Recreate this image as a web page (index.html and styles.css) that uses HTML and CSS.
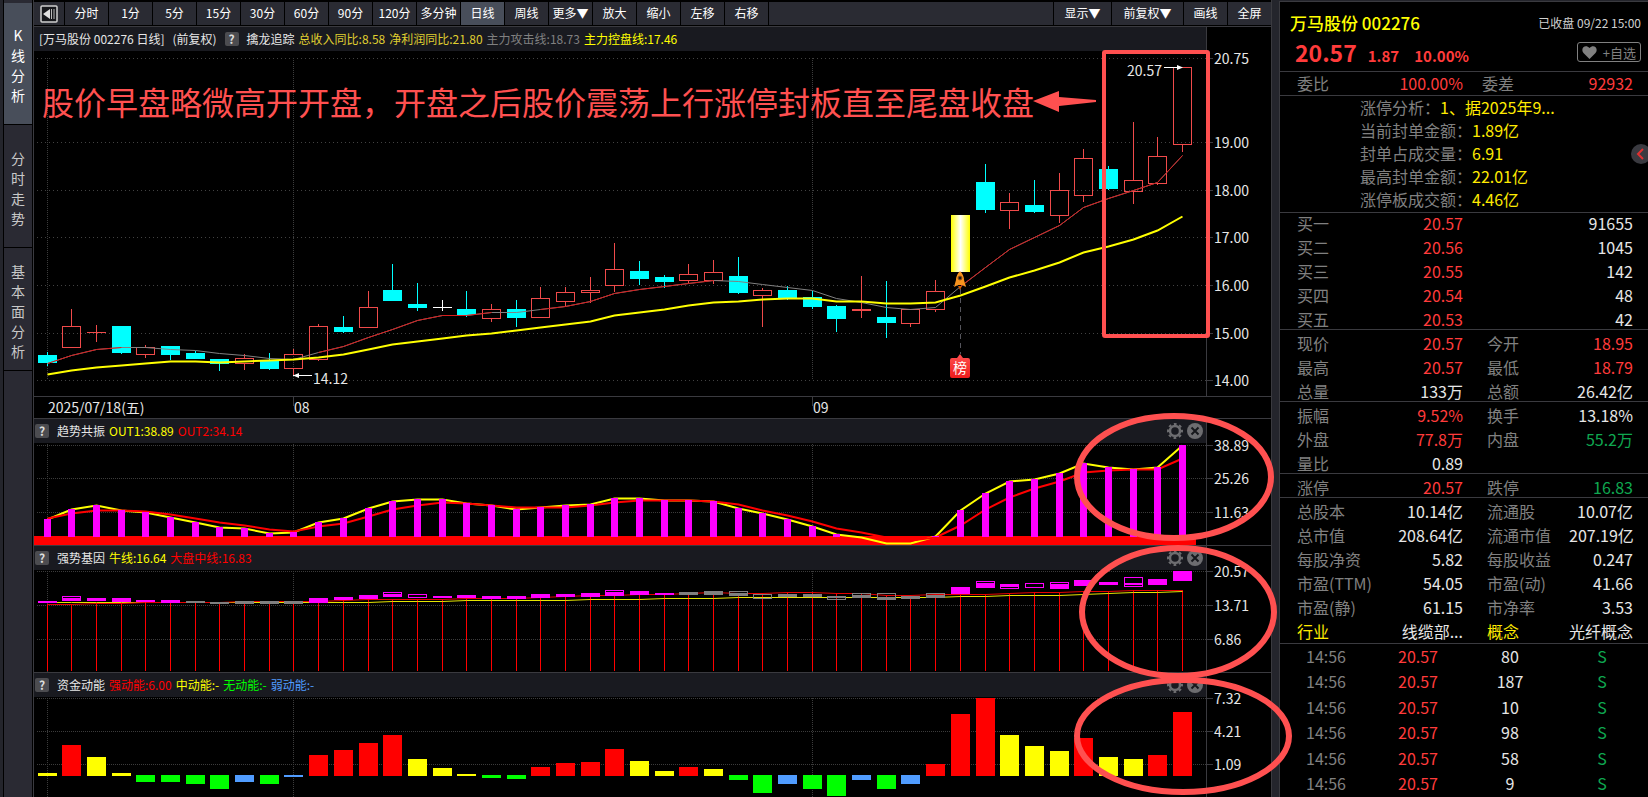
FILE: index.html
```html
<!DOCTYPE html>
<html lang="zh-CN">
<head>
    <meta charset="UTF-8">
    <meta name="viewport" content="width=device-width, initial-scale=1.0">
    <title>万马股份 002276</title>
    <link rel="stylesheet" href="styles.css">
</head>
<body>
    <svg class="symbols" aria-hidden="true">
        <symbol id="icon-gear" viewBox="0 0 16 16">
            <circle cx="8" cy="8" r="5" fill="none" stroke="#6d6d70" stroke-width="2.500"/>
            <circle cx="8" cy="8" r="7" fill="none" stroke="#6d6d70" stroke-width="2" stroke-dasharray="2.8 2.700" stroke-dashoffset="1.400"/>
        </symbol>
        <symbol id="icon-close" viewBox="0 0 16 16">
            <circle cx="8" cy="8" r="8" fill="#6d6d70"/>
            <path d="M4.500 4.500L11.500 11.500M11.500 4.500L4.500 11.500" stroke="#17181c" stroke-width="2"/>
        </symbol>
    </svg>

    <div class="app">
        <nav class="side-tabs">
            <button class="side-tab active">K线分析</button>
            <button class="side-tab">分时走势</button>
            <button class="side-tab">基本面分析</button>
        </nav>

        <main class="charts">
            <div class="toolbar">
                <button class="collapse-left" aria-label="收起">
                    <svg viewBox="0 0 18 18" width="18" height="18">
                        <rect x="1" y="1" width="16" height="16" rx="1" fill="#17181c" stroke="#d0d0d0" stroke-width="1.500"/>
                        <path d="M3 9L10 4V14Z" fill="#e0e0e0"/>
                        <path d="M11.500 4V14M14 4V14" stroke="#b8b8b8"/>
                    </svg>
                </button>
                <button class="tool">分时</button>
                <button class="tool">1分</button>
                <button class="tool">5分</button>
                <button class="tool">15分</button>
                <button class="tool">30分</button>
                <button class="tool">60分</button>
                <button class="tool">90分</button>
                <button class="tool">120分</button>
                <button class="tool">多分钟</button>
                <button class="tool active">日线</button>
                <button class="tool">周线</button>
                <button class="tool">更多▼</button>
                <button class="tool">放大</button>
                <button class="tool">缩小</button>
                <button class="tool">左移</button>
                <button class="tool">右移</button>
                <div class="toolbar-space"></div>
                <button class="tool tool-show">显示▼</button>
                <button class="tool tool-wide">前复权▼</button>
                <button class="tool">画线</button>
                <button class="tool">全屏</button>
            </div>

            <div class="pane-head pane-head-main">
                <div class="legend">
                    <span class="stock">[万马股份 002276 日线]</span>
                    <span>(前复权)</span>
                    <button class="help">?</button>
                    <span>擒龙追踪</span>
                    <span class="gold">总收入同比:8.58</span>
                    <span class="gold">净利润同比:21.80</span>
                    <span class="gray">主力攻击线:18.73</span>
                    <span class="yellow">主力控盘线:17.46</span>
                </div>
            </div>
            <div class="plot plot-main">
                <svg class="canvas" id="kline" viewBox="34 51 1172 345" preserveAspectRatio="none">
                    <defs>
                        <linearGradient id="glow">
                            <stop offset="0" stop-color="#ffff00"/>
                            <stop offset="0.5" stop-color="#ffffff"/>
                            <stop offset="1" stop-color="#ffff00"/>
                        </linearGradient>
                        <linearGradient id="badge" x2="0" y2="1">
                            <stop offset="0" stop-color="#ff5050"/>
                            <stop offset="1" stop-color="#ee1c1c"/>
                        </linearGradient>
                    </defs>
                </svg>
                <svg class="axis" id="axis-kline"></svg>
            </div>

            <svg class="dates" viewBox="34 397 1237 21" preserveAspectRatio="none">
                <path d="M293.500 397V406M812.500 397V406" stroke="#3c3c40"/>
                <text x="48" y="413">2025/07/18(五)</text>
                <text x="294" y="413">08</text>
                <text x="813" y="413">09</text>
            </svg>

            <div class="pane-head">
                <div class="legend">
                    <button class="help">?</button>
                    <span>趋势共振</span>
                    <span class="yellow">OUT1:38.89</span>
                    <span class="red">OUT2:34.14</span>
                    <div class="pane-tools">
                        <button aria-label="设置"><svg width="16" height="16"><use href="#icon-gear"/></svg></button>
                        <button aria-label="关闭"><svg width="16" height="16"><use href="#icon-close"/></svg></button>
                    </div>
                </div>
            </div>
            <div class="plot plot-sub">
                <svg class="canvas" id="trend" viewBox="34 443 1172 102" preserveAspectRatio="none"></svg>
                <svg class="axis" id="axis-trend"></svg>
            </div>

            <div class="pane-head">
                <div class="legend">
                    <button class="help">?</button>
                    <span>强势基因</span>
                    <span class="yellow">牛线:16.64</span>
                    <span class="red">大盘中线:16.83</span>
                    <div class="pane-tools">
                        <button aria-label="设置"><svg width="16" height="16"><use href="#icon-gear"/></svg></button>
                        <button aria-label="关闭"><svg width="16" height="16"><use href="#icon-close"/></svg></button>
                    </div>
                </div>
            </div>
            <div class="plot plot-sub">
                <svg class="canvas" id="gene" viewBox="34 570 1172 102" preserveAspectRatio="none"></svg>
                <svg class="axis" id="axis-gene"></svg>
            </div>

            <div class="pane-head">
                <div class="legend">
                    <button class="help">?</button>
                    <span>资金动能</span>
                    <span class="red">强动能:6.00</span>
                    <span class="yellow">中动能:-</span>
                    <span class="lime">无动能:-</span>
                    <span class="blue">弱动能:-</span>
                    <div class="pane-tools">
                        <button aria-label="设置"><svg width="16" height="16"><use href="#icon-gear"/></svg></button>
                        <button aria-label="关闭"><svg width="16" height="16"><use href="#icon-close"/></svg></button>
                    </div>
                </div>
            </div>
            <div class="plot plot-last">
                <svg class="canvas" id="money" viewBox="34 697 1172 100" preserveAspectRatio="none"></svg>
                <svg class="axis" id="axis-money"></svg>
            </div>
        </main>

        <aside class="quote">
            <header class="quote-head">
                <div class="quote-row">
                    <h1>万马股份 002276</h1>
                    <span class="status">已收盘 09/22 15:00</span>
                </div>
                <div class="quote-row">
                    <div class="price">
                        <strong class="last">20.57</strong>
                        <strong class="change">1.87</strong>
                        <strong>10.00%</strong>
                    </div>
                    <button class="favorite">
                        <svg viewBox="0 0 15 13" width="15" height="13"><path d="M7.500 13L1.500 7C-2 3 3-2.500 7.500 2C12-2.500 17 3 13.500 7Z" fill="#808080"/></svg>
                        +自选
                    </button>
                </div>
            </header>

            <table class="quote-table ratio">
                <tr><th>委比</th><td class="up">100.00%</td><th>委差</th><td class="up">92932</td></tr>
            </table>

            <div class="analysis">
                <p>涨停分析：<span>1、据2025年9...</span></p>
                <p>当前封单金额：<span>1.89亿</span></p>
                <p>封单占成交量：<span>6.91</span></p>
                <p>最高封单金额：<span>22.01亿</span></p>
                <p>涨停板成交额：<span>4.46亿</span></p>
            </div>

            <table class="quote-table bids">
                <tr><th>买一</th><td class="up">20.57</td><th></th><td>91655</td></tr>
                <tr><th>买二</th><td class="up">20.56</td><th></th><td>1045</td></tr>
                <tr><th>买三</th><td class="up">20.55</td><th></th><td>142</td></tr>
                <tr><th>买四</th><td class="up">20.54</td><th></th><td>48</td></tr>
                <tr><th>买五</th><td class="up">20.53</td><th></th><td>42</td></tr>
            </table>
            <table class="quote-table">
                <tr><th>现价</th><td class="up">20.57</td><th>今开</th><td class="up">18.95</td></tr>
                <tr><th>最高</th><td class="up">20.57</td><th>最低</th><td class="up">18.79</td></tr>
                <tr><th>总量</th><td>133万</td><th>总额</th><td>26.42亿</td></tr>
            </table>
            <table class="quote-table">
                <tr><th>振幅</th><td class="up">9.52%</td><th>换手</th><td>13.18%</td></tr>
                <tr><th>外盘</th><td class="up">77.8万</td><th>内盘</th><td class="down">55.2万</td></tr>
                <tr><th>量比</th><td>0.89</td><th></th><td></td></tr>
            </table>
            <table class="quote-table">
                <tr><th>涨停</th><td class="up">20.57</td><th>跌停</th><td class="down">16.83</td></tr>
            </table>
            <table class="quote-table">
                <tr><th>总股本</th><td>10.14亿</td><th>流通股</th><td>10.07亿</td></tr>
                <tr><th>总市值</th><td>208.64亿</td><th>流通市值</th><td>207.19亿</td></tr>
                <tr><th>每股净资</th><td>5.82</td><th>每股收益</th><td>0.247</td></tr>
                <tr><th>市盈(TTM)</th><td>54.05</td><th>市盈(动)</th><td>41.66</td></tr>
                <tr><th>市盈(静)</th><td>61.15</td><th>市净率</th><td>3.53</td></tr>
                <tr><th class="link">行业</th><td>线缆部...</td><th class="link">概念</th><td>光纤概念</td></tr>
            </table>

            <div class="ticks">
                <table>
                    <tr><th>14:56</th><td class="up">20.57</td><td>80</td><td class="down">S</td></tr>
                    <tr><th>14:56</th><td class="up">20.57</td><td>187</td><td class="down">S</td></tr>
                    <tr><th>14:56</th><td class="up">20.57</td><td>10</td><td class="down">S</td></tr>
                    <tr><th>14:56</th><td class="up">20.57</td><td>98</td><td class="down">S</td></tr>
                    <tr><th>14:56</th><td class="up">20.57</td><td>58</td><td class="down">S</td></tr>
                    <tr><th>14:56</th><td class="up">20.57</td><td>9</td><td class="down">S</td></tr>
                </table>
            </div>

            <button class="expand" aria-label="展开">
                <svg viewBox="0 0 20 20" width="20" height="20"><path d="M12 5L7 10L12 15" fill="none" stroke="#e03030" stroke-width="2"/></svg>
            </button>
        </aside>
    </div>

    <!-- hand-drawn notes over the charts -->
    <svg class="notes" viewBox="0 0 1648 797" preserveAspectRatio="none">
        <text x="42" y="115">股价早盘略微高开开盘，开盘之后股价震荡上行涨停封板直至尾盘收盘</text>
        <path class="arrow" d="M1033 101L1059 91V97L1096 100V102L1059 106V112Z"/>
        <rect x="1104" y="52" width="104" height="284" rx="1" stroke-width="4"/>
        <ellipse cx="1174" cy="477" rx="97" ry="61"/>
        <ellipse cx="1178" cy="612" rx="96" ry="64"/>
        <ellipse cx="1183" cy="736" rx="106" ry="56"/>
    </svg>

    <script src="script.js"></script>
</body>
</html>
```

FILE: styles.css
```css
* {
    box-sizing: border-box;
}

body {
    margin: 0;
    background-color: #24252c;
    color: #e6e6e6;
    font-family: "Noto Sans CJK SC", "Open Sans", sans-serif;
    font-size: 12px;
}

button {
    margin: 0;
    padding: 0;
    border: none;
    background: none;
    color: inherit;
    font: inherit;
    cursor: pointer;
}

svg {
    display: block;
}

.symbols {
    position: absolute;
    width: 0;
    height: 0;
}

.app {
    display: grid;
    grid-template-columns: 33px 1fr 376px;
    grid-template-rows: minmax(0, 1fr);
    height: 100vh;
    min-height: 780px;
    overflow: hidden;
}

/* left tabs */
.side-tabs {
    margin-left: 3px;
    padding: 3px 1px 0 0;
    border-left: 1px solid #000;
    background-color: #2a2a33;
    box-shadow: inset -1px 0 0 #000;
}

.side-tab {
    display: block;
    width: 28px;
    height: 123px;
    padding: 3px 7px 0;
    border-bottom: 1px solid #000;
    color: #c8c8c8;
    font-size: 14px;
    line-height: 20px;
    word-break: break-all;
}

.side-tab.active {
    height: 122px;
    background-color: #484e5a;
    color: #fff;
}

/* chart column */
.charts {
    display: flex;
    flex-direction: column;
    min-width: 0;
    border-left: 1px solid #3a3a3f;
    border-right: 1px solid #3a3a3f;
    background-color: #000;
}

.toolbar {
    display: flex;
    flex: none;
    height: 27px;
    padding: 2px 0 1px;
    border-bottom: 1px solid #3a3a3f;
}

.collapse-left {
    width: 30px;
    padding: 2px 6px;
    background-color: #2a2b33;
}

.tool {
    width: 44px;
    padding-bottom: 2px;
    border-left: 1px solid #000;
    background-color: #2a2b33;
    color: #fff;
    line-height: 20px;
    white-space: nowrap;
}

.charts .tool.active {
    background-color: #484e5a;
}

.tool-show {
    width: 58px;
}

.tool-wide {
    width: 72px;
}

.toolbar-space {
    flex: 1;
    border-left: 1px solid #000;
    background-color: #2a2b33;
}

.pane-head {
    flex: none;
    height: 24px;
    padding-right: 65px;
}

.legend {
    display: flex;
    align-items: center;
    gap: 4px;
    height: 24px;
    padding: 0 3px 0 1px;
    background-color: #191a20;
    box-shadow: 1px 0 0 #3a3a3f;
    line-height: 20px;
    white-space: nowrap;
}

.pane-head-main .legend {
    padding-left: 5px;
}

.stock {
    margin-right: 4px;
}

.help {
    width: 14px;
    height: 14px;
    margin-right: 4px;
    border-radius: 2px;
    background-color: #4c4c50;
    color: #ddd;
    font-weight: bold;
    line-height: 14px;
}

.pane-head-main .help {
    margin-left: 4px;
}

.pane-tools {
    display: flex;
    gap: 4px;
    margin-left: auto;
}

.gold { color: #e0d030; }
.yellow { color: #ffff00; }
.red { color: #ff0000; }
.gray { color: #808080; }
.lime { color: #00ff00; }
.blue { color: #509cff; }

.plot {
    display: flex;
    min-height: 0;
    border-bottom: 1px solid #3a3a3f;
}

/* the borders are part of each share, so the shares add up to the column */
.plot-main {
    flex: 345 0 1px;
}

.plot-sub {
    flex: 102 0 1px;
}

.plot-last {
    flex: 100 0 0;
    border-bottom: none;
}

.canvas {
    flex: 1;
    min-width: 0;
    height: 100%;
    fill: none;
}

.canvas rect {
    shape-rendering: crispEdges;
}

.axis {
    width: 65px;
    height: 100%;
    overflow: visible;
    border-left: 1px solid #3a3a3f;
}

.axis text,
.canvas text,
.dates text {
    fill: #e6e6e6;
    font-size: 14px;
}

.canvas .badge-text {
    fill: #fff;
}

.dates {
    flex: none;
    width: 100%;
    height: 22px;
    border-bottom: 1px solid #3a3a3f;
}

.grid {
    stroke: #424242;
    stroke-dasharray: 1 3;
}

.grid-fine {
    stroke: #3c3c3c;
    stroke-dasharray: 1 1;
}

/* quote panel */
.quote {
    position: relative;
    display: flex;
    flex-direction: column;
    min-width: 0;
    margin: 1px 0 0 7px;
    border-top: 1px solid #3a3a3f;
    border-left: 1px solid #3a3a3f;
    background-color: #000;
}

.quote-head {
    height: 70px;
    padding: 5px 7px 0 10px;
    border-bottom: 1px solid #3a3a3f;
}

.quote-row {
    display: flex;
    align-items: center;
    justify-content: space-between;
    height: 30px;
}

.quote h1 {
    margin: 0;
    color: #ffff00;
    font-size: 17px;
    font-weight: 500;
}

.status {
    color: #d0d0d0;
}

.price {
    display: flex;
    align-items: baseline;
    padding-left: 5px;
    color: #ff3b3b;
    font-size: 15px;
}

.last {
    margin-right: 11px;
    font-size: 23px;
    line-height: 30px;
}

.change {
    margin-right: 15px;
}

.favorite {
    display: flex;
    align-items: center;
    gap: 6px;
    height: 20px;
    padding: 0 4px;
    border: 1px solid #808080;
    border-radius: 3px;
    color: #808080;
    font-size: 13px;
}

.quote-table {
    width: 100%;
    border-spacing: 0;
    table-layout: fixed;
    box-shadow: inset 0 -1px 0 #3a3a3f;
    font-size: 16px;
    line-height: 20px;
}

.quote-table th,
.quote-table td {
    padding: 3px 0 1px;
    font-weight: normal;
    white-space: nowrap;
}

.quote-table th {
    width: 106px;
    padding-left: 17px;
    color: #808080;
    text-align: left;
}

.quote-table td {
    text-align: right;
}

.quote-table th:nth-child(3) {
    padding-left: 24px;
}

.quote-table td:nth-child(2) {
    width: 77px;
}

.quote-table td:nth-child(4) {
    padding-right: 15px;
}

.quote-table:last-of-type {
    padding-bottom: 2px;
}

.ratio th,
.ratio td {
    padding-top: 1px;
    padding-bottom: 3px;
}

.ratio th:nth-child(3) {
    padding-left: 19px;
}

.quote-table.bids {
    margin-top: -3px;
}

.quote .up { color: #ff3b3b; }
.quote .down { color: #0fa850; }
.quote .link { color: #ffeb00; }

.analysis {
    height: 117px;
    padding-left: 80px;
    border-bottom: 1px solid #3a3a3f;
    color: #808080;
    font-size: 16px;
    line-height: 23px;
}

.analysis p {
    margin: 0;
}

.analysis span {
    color: #ffeb00;
}

.ticks {
    flex: 1;
    min-height: 0;
}

.ticks table {
    width: 100%;
    height: 100%;
    border-spacing: 0;
    table-layout: fixed;
    font-size: 16px;
    line-height: 20px;
    text-align: center;
}

.ticks th,
.ticks td {
    padding: 0 0 2px;
}

.ticks th {
    color: #808080;
    font-weight: normal;
}

.expand {
    position: absolute;
    top: 142px;
    right: -3px;
    width: 20px;
    height: 20px;
    border-radius: 50%;
    background-color: #3a3a40;
}

/* notes drawn by hand */
.notes {
    position: absolute;
    top: 0;
    left: 0;
    width: 100%;
    height: 100%;
    fill: none;
    stroke: #ff5050;
    stroke-width: 6;
    pointer-events: none;
}

.notes text {
    fill: #ff5050;
    stroke: none;
    font-size: 32px;
}

.notes .arrow {
    fill: #ff5050;
    stroke: none;
}
```

FILE: script.js
```javascript
const NS = 'http://www.w3.org/2000/svg';
const RED = '#ff0000', YELLOW = '#ffff00', LIME = '#00ff00', BLUE = '#509cff';
const MAGENTA = '#ff00ff', GRAY = '#808080', CYAN = '#00ffff', UP = '#f04a4a';

// kind, high, body top, body bottom, low
const candles = [
    ['c',352,355,363,366],['r',309,326,348,348],['r',325,332,332,342],['c',326,326,353,354],['r',345,347,355,358],
    ['c',346,346,355,360],['c',351,353,359,359],['c',359,359,364,371],['r',354,358,364,370],['c',353,361,369,370],
    ['r',349,354,369,375],['r',324,326,360,361],['c',316,327,332,333],['r',291,307,328,328],['c',264,290,301,301],
    ['c',283,304,308,311],['w',300,307,307,311],['c',291,309,315,317],['r',304,309,319,322],['c',300,309,318,327],
    ['r',287,298,318,318],['r',287,292,302,307],['r',277,290,293,303],['r',243,269,286,292],['c',261,271,279,285],
    ['c',275,277,282,288],['r',264,274,281,283],['r',260,272,281,284],['c',257,276,293,294],['r',288,290,296,327],
    ['c',286,290,298,300],['c',291,297,307,309],['c',305,306,319,332],['r',276,309,311,318],['c',281,317,323,338],
    ['r',309,309,324,327],['r',280,291,310,312],['y',215,215,272,272],['c',164,182,210,213],['r',193,202,211,229],
    ['c',180,205,212,213],['r',173,190,216,223],['r',149,158,196,202],['c',166,169,189,190],['r',122,180,192,204],
    ['r',137,156,184,185],['r',67,67,145,152]
];
const attack = [363,355,349,347,347,349,350,353,355,358,359,352,346,337,329,320,315,315,312,312,309,306,301,293,289,286,283,280,281,284,287,290,298,302,307,309,307,286,267,249,237,225,207,198,190,182,155];
const control = [374,370,367,365,363,361,361,362,361,360,359,357,354,349,344,341,338,335,333,330,327,324,321,315,312,309,305,302,301,299,298,298,301,301,303,303,302,295,286,277,270,262,252,246,239,230,216];
const out1 = [519,509,505,510,512,517,522,527,528,533,532,522,518,508,501,499,499,503,505,509,507,505,504,498,498,500,500,501,508,513,519,526,534,537,543,543,536,510,493,481,479,473,463,467,469,467,445];
const out2 = [518,513,510,510,511,514,518,522,525,529,531,526,523,516,509,505,502,503,505,507,507,507,505,502,500,500,500,501,504,510,515,521,528,532,537,540,537,525,509,497,488,481,472,470,469,469,458];
// box top, filled part top, filled part bottom, box bottom
const boxes = [
    [601,601,603,603],[596,598,601,601],[598,598,601,601],[598,598,602,602],[600,600,602,602],[600,600,603,603],[601,601,603,603],
    [602,602,604,604],[601,601,604,604],[601,601,604,604],[601,601,604,604],[598,598,603,603],[597,597,600,600],[595,595,599,599],
    [592,594,597,597],[594,594,595,598],[596,596,598,598],[595,595,598,598],[596,596,599,599],[596,596,599,599],[594,594,598,598],
    [594,594,597,597],[593,593,597,597],[590,592,596,596],[591,591,595,595],[593,593,595,595],[592,592,595,595],[591,592,595,595],
    [591,593,596,596],[594,594,595,599],[594,594,597,597],[594,594,597,597],[596,596,598,600],[593,595,598,598],[593,597,600,600],
    [596,596,599,599],[593,595,598,598],[587,587,594,594],[581,583,588,588],[584,584,587,589],[583,583,584,588],[582,584,589,589],
    [580,580,586,586],[582,582,585,585],[577,583,585,587],[579,580,585,585],[571,571,581,581]
];
const grayBox = i => (i > 5 && i < 11) || (i > 25 && i < 37);
const middle = [604,604,603,603,602,602,602,602,601,601,601,601,600,599,599,599,599,598,598,598,597,596,595,595,594,594,593,592,593,593,592,592,593,593,595,595,594,594,594,593,592,592,591,591,590,590,590];
const bull = [602,602,602,602,602,602,602,602,602,602,602,602,602,602,601,601,601,600,600,600,600,600,599,599,599,598,598,598,597,597,597,597,597,597,597,597,597,596,596,595,595,595,594,593,592,592,591];
// colour, bar end
const money = [
    ['y',773],['r',745],['y',757],['y',773],['g',782],['g',782],['g',784],['g',789],['b',782],['g',784],['b',777],['r',755],
    ['r',750],['r',743],['r',735],['y',759],['y',768],['y',774],['g',778],['g',779],['r',767],['r',763],['r',762],['r',749],
    ['y',761],['y',771],['r',767],['y',769],['g',780],['g',793],['b',784],['g',789],['g',796],['b',780],['g',789],['b',784],
    ['r',764],['r',714],['r',698],['y',735],['y',746],['y',751],['r',738],['y',757],['y',759],['r',755],['r',712]
];

const xAt = i => Math.floor(47.19 + 24.68 * i);

function add(parent, name, attrs, text) {
    const el = document.createElementNS(NS, name);
    for (const key in attrs) el.setAttribute(key, attrs[key]);
    if (text) el.textContent = text;
    parent.appendChild(el);
    return el;
}

function box(svg, x, y, width, height, fill) {
    add(svg, 'rect', { x, y, width, height, fill });
}

function line(svg, values, stroke, width, from = 0) {
    const points = values.map((y, i) => (xAt(i + from) + 0.5) + ',' + (y + 0.5)).join(' ');
    add(svg, 'polyline', { points, stroke, 'stroke-width': width });
}

function grid(svg, ys, top, bottom, cls) {
    ys.forEach(y => add(svg, 'path', { d: `M37 ${y + 0.5}H1206`, class: cls }));
    [47, 293, 812].forEach(x => add(svg, 'path', { d: `M${x + 0.5} ${top}V${bottom}`, class: 'grid-fine' }));
}

function axis(id, top, height, labels) {
    const svg = document.getElementById(id);
    labels.forEach(([y, text]) => {
        const pos = (y + 0.5 - top) / height * 100 + '%';
        add(svg, 'line', { x1: 0, x2: 6, y1: pos, y2: pos, stroke: '#3a3a3f' });
        add(svg, 'text', { x: 7, y: pos, dy: 5 }, text);
    });
}

// k-line
const kline = document.getElementById('kline');
grid(kline, [58, 142, 190, 237, 285, 333, 380], 58, 380, 'grid');
candles.forEach(([kind, high, top, bottom, low], i) => {
    const x = xAt(i);
    if (kind === 'y') {
        box(kline, x - 9, top, 19, bottom - top, 'url(#glow)');
    } else if (kind === 'c') {
        box(kline, x, high, 1, low - high, CYAN);
        box(kline, x - 9, top, 19, bottom - top, CYAN);
    } else {
        const color = kind === 'w' ? '#ffffff' : UP;
        box(kline, x, high, 1, top - high, color);
        box(kline, x, bottom, 1, low - bottom, color);
        if (top === bottom) box(kline, x - 9, top, 19, 1, color);
        else add(kline, 'rect', { x: x - 8.5, y: top + 0.5, width: 18, height: bottom - top - 1, stroke: color });
    }
});
line(kline, attack, GRAY, 1);
[[0, 3], [11, 18], [20, 27], [37, 46]].forEach(([a, b]) => line(kline, attack.slice(a, b + 1), '#d81c1c', 1, a));
line(kline, control, YELLOW, 2);
add(kline, 'path', { d: 'M960.5 289V354', stroke: '#55555c', 'stroke-dasharray': '5 4' });
add(kline, 'path', { d: 'M960 271Q964 275 964 280L966 287L962 285H958L954 287L956 280Q956 275 960 271Z', fill: '#f7931e' });
add(kline, 'circle', { cx: 960, cy: 278, r: 2, fill: '#17181c', stroke: '#a05510' });
add(kline, 'path', { d: 'M958 286H962L960 290Z', fill: '#d45a00' });
add(kline, 'path', { d: 'M952 358H957L960 354L963 358H968Q970 358 970 360V376Q970 378 968 378H952Q950 378 950 376V360Q950 358 952 358Z', fill: 'url(#badge)' });
add(kline, 'text', { x: 953, y: 373, class: 'badge-text' }, '榜');
add(kline, 'path', { d: 'M293 375.5H312', stroke: '#ffffff' });
add(kline, 'path', { d: 'M293 375.500L299 373V378Z', fill: '#ffffff' });
add(kline, 'text', { x: 313, y: 384 }, '14.12');
add(kline, 'path', { d: 'M1164 67.500H1182', stroke: '#ffffff' });
add(kline, 'path', { d: 'M1183 67.500L1177 65V70Z', fill: '#ffffff' });
add(kline, 'text', { x: 1127, y: 76 }, '20.57');
axis('axis-kline', 51, 345, [[58, '20.75'], [142, '19.00'], [190, '18.00'], [237, '17.00'], [285, '16.00'], [333, '15.00'], [380, '14.00']]);

// trend
const trend = document.getElementById('trend');
grid(trend, [445, 478, 512], 444, 536, 'grid-fine');
box(trend, 34, 536, 1162, 9, RED);
line(trend, out1, YELLOW, 2);
line(trend, out2, RED, 2);
out1.forEach((y, i) => {
    if (y < 537) box(trend, xAt(i) - 3, y, 7, 537 - y, MAGENTA);
});
axis('axis-trend', 443, 102, [[445, '38.89'], [478, '25.26'], [512, '11.63']]);

// gene
const gene = document.getElementById('gene');
grid(gene, [571, 605, 639], 571, 672, 'grid-fine');
middle.forEach((y, i) => box(gene, xAt(i), y, 1, 671 - y, RED));
line(gene, bull, '#e6e600', 1);
line(gene, middle, '#e60000', 1);
boxes.forEach(([top, fillTop, fillBottom, bottom], i) => {
    const color = grayBox(i) ? GRAY : MAGENTA;
    add(gene, 'rect', { x: xAt(i) - 8.5, y: top + 0.5, width: 18, height: bottom - top - 1, stroke: color });
    box(gene, xAt(i) - 9, fillTop, 19, fillBottom - fillTop, color);
});
axis('axis-gene', 570, 102, [[571, '20.57'], [605, '13.71'], [639, '6.86']]);

// money
const moneySvg = document.getElementById('money');
const moneyColors = { r: RED, y: YELLOW, g: LIME, b: BLUE };
grid(moneySvg, [698, 731, 764], 698, 797, 'grid-fine');
money.forEach(([kind, y], i) => {
    const top = y < 776 ? y : 775;
    const bottom = y < 776 ? 776 : y;
    box(moneySvg, xAt(i) - 9, top, 19, bottom - top, moneyColors[kind]);
});
axis('axis-money', 697, 100, [[698, '7.32'], [731, '4.21'], [764, '1.09']]);
```
